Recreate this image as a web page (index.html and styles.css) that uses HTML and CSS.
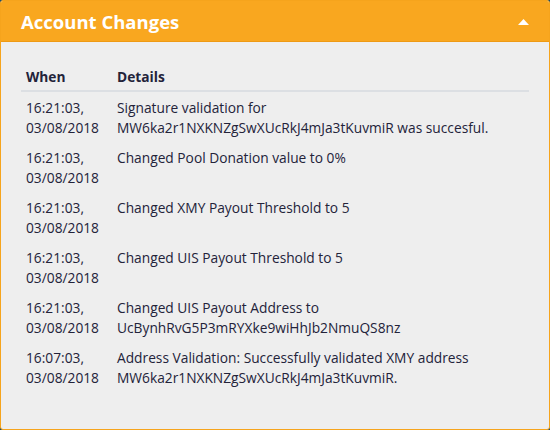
FILE: index.html
```html
<!DOCTYPE html>
<html>
<head>
<meta charset="utf-8">
<link rel="stylesheet" href="styles.css">
</head>
<body>
<div class="panel">
  <div class="panel-header">
    <h2 class="panel-title">Account Changes</h2>
    <svg class="caret" width="11" height="6" viewBox="0 0 11 6"><path d="M0 6 L5.5 0 L11 6 Z" fill="#fff"/></svg>
  </div>
  <div class="panel-body">
    <table class="log">
      <thead>
        <tr><th class="col-when">When</th><th>Details</th></tr>
      </thead>
      <tbody>
        <tr><td>16:21:03,<br>03/08/2018</td><td>Signature validation for<br>MW6ka2r1NXKNZgSwXUcRkJ4mJa3tKuvmiR was succesful.</td></tr>
        <tr><td>16:21:03,<br>03/08/2018</td><td>Changed Pool Donation value to 0%</td></tr>
        <tr><td>16:21:03,<br>03/08/2018</td><td>Changed XMY Payout Threshold to 5</td></tr>
        <tr><td>16:21:03,<br>03/08/2018</td><td>Changed UIS Payout Threshold to 5</td></tr>
        <tr><td>16:21:03,<br>03/08/2018</td><td>Changed UIS Payout Address to<br>UcBynhRvG5P3mRYXke9wiHhJb2NmuQS8nz</td></tr>
        <tr><td>16:07:03,<br>03/08/2018</td><td>Address Validation: Successfully validated XMY address<br>MW6ka2r1NXKNZgSwXUcRkJ4mJa3tKuvmiR.</td></tr>
      </tbody>
    </table>
  </div>
</div>
</body>
</html>
```
FILE: styles.css
```css
html, body {
  margin: 0;
  padding: 0;
  background: #1d4e6b;
}
body {
  font-family: "Open Sans", "Noto Sans", sans-serif;
  color: #23233a;
}
.panel {
  width: 550px;
  height: 430px;
  box-sizing: border-box;
  border: 1px solid #f6a41c;
  border-radius: 3px;
  background: #eeeeee;
  overflow: hidden;
  display: flex;
  flex-direction: column;
}
.panel-header {
  background: #f9a71f;
  height: 40px;
  border-bottom: 1px solid #ee9a14;
  display: flex;
  align-items: center;
  justify-content: space-between;
  padding: 0 20px 0 20px;
  flex-shrink: 0;
}
.panel-title {
  margin: 0;
  color: #fff;
  font-size: 18.5px;
  font-weight: 700;
}
.caret {
  margin-top: 1px;
}
.panel-body {
  padding: 23px 20px 0 20px;
}
.log {
  width: 100%;
  border-collapse: collapse;
  font-size: 13.75px;
  line-height: 20px;
}
.log th {
  text-align: left;
  font-weight: 700;
  padding: 2px 5px 3px 5px;
  border-bottom: 2px solid #dcdfe3;
}
.log th.col-when {
  width: 81px;
}
.log td {
  padding: 6px 5px 4px 5px;
  vertical-align: top;
}
```
